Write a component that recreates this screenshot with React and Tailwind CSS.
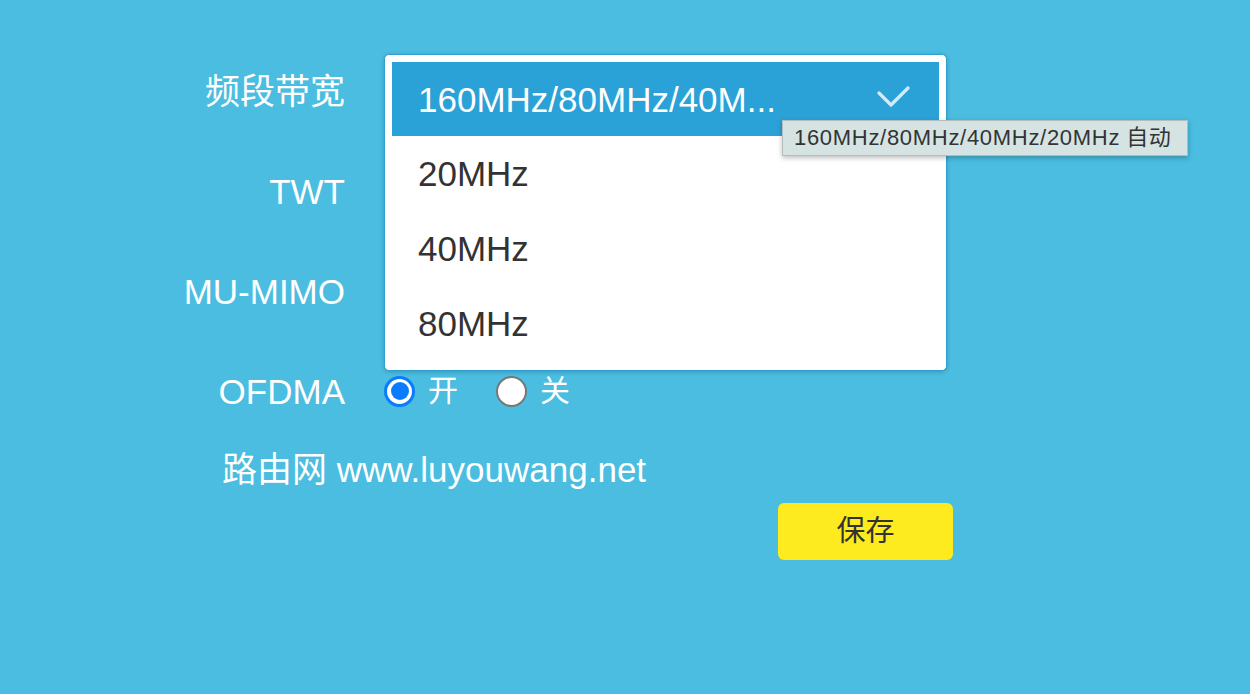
import React from "react";

const FONT = { fontFamily: '"Liberation Sans", "Noto Sans CJK SC", sans-serif' };

function Radio({ checked }) {
  return checked ? (
    <div className="w-[31px] h-[31px] rounded-full border-[3px] border-[#0b7bff] bg-white flex items-center justify-center shrink-0">
      <div className="w-[18px] h-[18px] rounded-full bg-[#0b7bff]" />
    </div>
  ) : (
    <div className="w-[31px] h-[31px] rounded-full border-2 border-[#777777] bg-white shrink-0" />
  );
}

function RadioGroup() {
  return (
    <div className="flex items-center">
      <Radio checked />
      <span className="ml-[13px] text-[30px] text-white leading-none">开</span>
      <div className="ml-[38px]">
        <Radio />
      </div>
      <span className="ml-[13px] text-[30px] text-white leading-none">关</span>
    </div>
  );
}

function Row({ label, children }) {
  return (
    <div className="flex items-center h-[100px]">
      <div className="w-[345px] text-right text-white text-[35px] leading-none">{label}</div>
      <div className="ml-[39px] relative flex items-center">{children}</div>
    </div>
  );
}

export default function App() {
  return (
    <div className="w-full h-[694px] bg-[#4abde0] relative overflow-hidden" style={FONT}>
      <div className="pt-[41px] flex flex-col">
        <Row label="频段带宽">
          <div className="w-[563px] h-[74px]" />
        </Row>
        <Row label="TWT">
          <div className="h-[31px]" />
        </Row>
        <Row label="MU-MIMO">
          <div className="h-[31px]" />
        </Row>
        <Row label="OFDMA">
          <RadioGroup />
        </Row>
        <div className="h-[56px] flex items-center pl-[222px] text-white text-[35px] leading-none">
          路由网 www.luyouwang.net
        </div>
        <div className="mt-[6px] pl-[778px]">
          <button className="w-[175px] h-[57px] rounded-[6px] bg-[#fdeb1f] text-[#333333] text-[29px] flex items-center justify-center">
            保存
          </button>
        </div>
      </div>

      {/* open dropdown */}
      <div className="absolute left-[384px] top-[54px] w-[563px] h-[317px] bg-white rounded-[5px] border border-[#2f9fd2] p-[7px] shadow-[0_1px_4px_rgba(0,0,0,0.2)]">
        <div className="h-[74px] bg-[#2aa2d7] flex items-center justify-between pl-[26px] pr-[29px]">
          <span className="text-white text-[35px] leading-none">160MHz/80MHz/40M...</span>
          <svg width="33" height="22" viewBox="0 0 33 22" className="mt-[-4px]">
            <polyline points="2,7 14,19 31,2" fill="none" stroke="#d3ebf7" strokeWidth="3.2" strokeLinecap="round" strokeLinejoin="round" />
          </svg>
        </div>
        {["20MHz", "40MHz", "80MHz"].map((t) => (
          <div key={t} className="h-[75px] flex items-center pl-[26px] text-[#333333] text-[35px] leading-none">
            {t}
          </div>
        ))}
      </div>

      {/* tooltip */}
      <div className="absolute left-[782px] top-[120px] w-[406px] h-[36px] bg-[#d6e3e3] border border-[#b3bdbd] shadow-[0_2px_5px_rgba(0,0,0,0.25)] flex items-center pl-[11px] text-[#333333] text-[22px] leading-none tracking-[0.7px]">
        160MHz/80MHz/40MHz/20MHz<span className="ml-[6px]">自动</span>
      </div>
    </div>
  );
}
